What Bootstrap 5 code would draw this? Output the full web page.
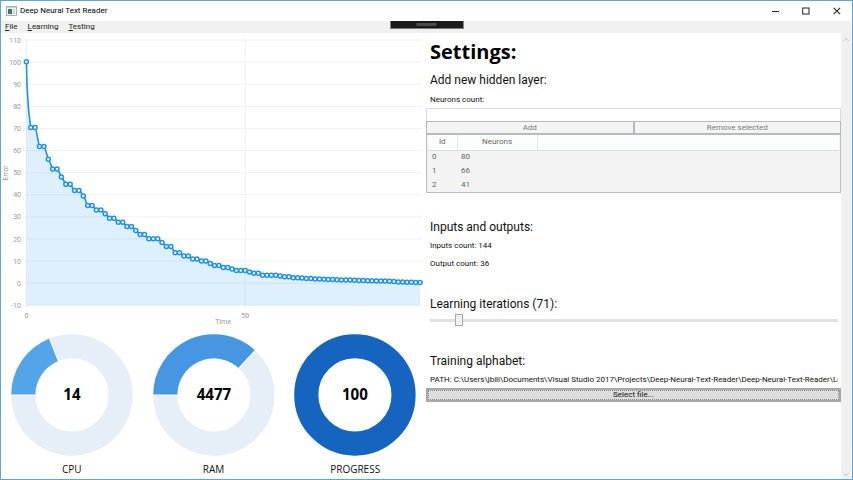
<!DOCTYPE html>
<html lang="en">
<head>
<meta charset="utf-8">
<meta name="viewport" content="width=device-width, initial-scale=1">
<title>Deep Neural Text Reader</title>
<link href="https://cdn.jsdelivr.net/npm/bootstrap@5.3.0/dist/css/bootstrap.min.css" rel="stylesheet">
<style>
body{font-family:Roboto,"Open Sans",sans-serif;font-size:8px;line-height:12px;color:#111;background:#fff}
.app-window{border:1px solid #5aa5e2;min-height:100vh}
.title-bar{height:20px;padding-left:5px}
.app-name{margin-left:3px}
.win-btn{width:31px;height:18px}
.menu-strip{background:#f0f0f0;height:12px;line-height:14px;padding-left:4px;gap:10px;margin-right:1px}
.menu-strip a{color:#222;text-decoration:none}
.dock-tab{top:20px;width:73px;height:8px;background:#1a1a1a;border-bottom:1px solid #777}
.dock-grip{width:20px;height:3px;background:#4d4d4d;margin-top:2px}
.pane-left{flex:425 1 0;min-width:0}
.pane-right{flex:415 1 0;min-width:0;padding-top:4px}
.scroll-rail{width:10px;background:#f0f0f0;margin-right:1px;padding:4px 0 2px}
.axis-text{font-size:7px;fill:#9a9a9a}
.gauge{width:86%}
.gauge-value{font-family:"Open Sans",sans-serif;font-size:15px;font-weight:700;fill:#000}
.gauge-name{font-family:"Open Sans",sans-serif;font-size:10px;line-height:14px;margin-top:6px}
.page-title{font-family:"Open Sans",sans-serif;font-size:20px;line-height:30px;font-weight:700;color:#000}
.section-title{font-size:12px;line-height:18px;font-weight:400;color:#111}
.gap-above{margin-top:25px}
.indent{padding-left:4px;padding-right:3px}
.neuron-label{margin:5px 0 2px}
.neuron-input{height:13px;border:1px solid #dcdcdc;border-bottom:0;outline:0;font-size:8px}
.flat-btn{height:13px;line-height:11px;font-size:8px;padding:0;border:1px solid #b4b8bb;border-radius:0;background:#f4f4f4;color:#7c7c7c}
.layer-list{border:1px solid #b9bdbf;background:#f3f3f3;padding:0 1px;color:#666}
.layer-list table{table-layout:fixed}
.layer-list th{height:15px;padding:0;font-weight:400;text-align:center;background:#fcfdfd;border-bottom:1px solid #ddd;border-right:1px solid #e2e4e5}
.layer-list th:last-child{border-right:0}
.layer-list td{height:14px;padding:0 0 0 4px}
.col-id{width:29px}.col-neurons{width:80px}
.stat-line{margin-bottom:6px}
.iter-slider{height:14px;appearance:none;background:transparent}
.iter-slider::-webkit-slider-runnable-track{height:3px;background:#e1e1e1}
.iter-slider::-webkit-slider-thumb{appearance:none;width:8px;height:12px;margin-top:-5px;background:#f0f0f0;border:1px solid #aaa;border-radius:0}
.path-line{margin-bottom:2px}
.file-btn{height:14px;line-height:10px;font-size:8px;padding:0;border:2px solid #a8a8a8;border-radius:0;background:#ddd;outline:1px dotted #888;outline-offset:-3px;color:#111}
</style>
<script src="https://cdn.jsdelivr.net/npm/bootstrap@5.3.0/dist/js/bootstrap.bundle.min.js"></script>
</head>
<body>
<div class="app-window position-relative d-flex flex-column">
  <header class="title-bar d-flex align-items-center">
    <svg width="11" height="10" viewBox="0 0 11 10" aria-hidden="true"><rect x=".5" y=".5" width="10" height="9" fill="#f3f3f3" stroke="#aab3b7"/><rect x="1" y="1" width="9" height="1" fill="#c8d0d4"/><rect x="2" y="3" width="4" height="5" fill="#397a72"/><rect x="7" y="3" width="2" height="5" fill="#d4d8da"/></svg>
    <span class="app-name flex-grow-1 text-black">Deep Neural Text Reader</span>
    <button class="win-btn btn p-0 border-0 d-flex align-items-center justify-content-center" aria-label="Minimize"><svg width="8" height="8"><path d="M1 4.500h7" stroke="#222"/></svg></button>
    <button class="win-btn btn p-0 border-0 d-flex align-items-center justify-content-center" aria-label="Maximize"><svg width="8" height="8"><rect x=".7" y="1" width="6.300" height="6" fill="none" stroke="#222"/></svg></button>
    <button class="win-btn btn p-0 border-0 d-flex align-items-center justify-content-center" aria-label="Close"><svg width="8" height="8"><path d="M.7 .8l6.400 6.400M7.100 .8L.7 7.200" stroke="#222" stroke-width="1.100"/></svg></button>
  </header>
  <nav class="menu-strip d-flex align-items-center" aria-label="Main menu">
    <a href="#"><u>F</u>ile</a><a href="#"><u>L</u>earning</a><a href="#"><u>T</u>esting</a>
  </nav>
  <div class="dock-tab position-absolute start-50 translate-middle-x d-flex justify-content-center"><div class="dock-grip"></div></div>

  <main class="d-flex flex-grow-1">
    <section class="pane-left" aria-label="Monitoring">
      <svg id="chart" class="d-block w-100" viewBox="1 33 425 301" role="img" aria-label="Error over time"></svg>
      <div class="row g-0 text-center" id="gauges"></div>
    </section>

    <section class="pane-right" aria-label="Settings">
      <h1 class="page-title indent m-0">Settings:</h1>
      <h2 class="section-title indent m-0 mt-1">Add new hidden layer:</h2>
      <label class="neuron-label indent d-block" for="neurons">Neurons count:</label>
      <input id="neurons" class="neuron-input d-block w-100 p-0" type="text">
      <div class="d-flex">
        <button class="flat-btn btn w-50">Add</button><button class="flat-btn btn w-50">Remove selected</button>
      </div>
      <div class="layer-list">
        <table class="w-100">
          <thead><tr><th class="col-id">Id</th><th class="col-neurons">Neurons</th><th></th></tr></thead>
          <tbody><tr><td>0</td><td>80</td><td></td></tr><tr><td>1</td><td>66</td><td></td></tr><tr><td>2</td><td>41</td><td></td></tr></tbody>
        </table>
      </div>
      <h2 class="section-title gap-above indent mb-1">Inputs and outputs:</h2>
      <p class="stat-line indent">Inputs count: 144</p>
      <p class="stat-line indent">Output count: 36</p>
      <h2 class="section-title gap-above indent mb-0"><label for="iterations">Learning iterations (71):</label></h2>
      <div class="indent d-flex"><input id="iterations" class="iter-slider w-100 m-0 p-0" type="range" min="10" max="1000" value="71"></div>
      <h2 class="section-title gap-above indent mb-1">Training alphabet:</h2>
      <div class="indent"><p class="path-line overflow-hidden text-nowrap">PATH: C:\Users\jbili\Documents\Visual Studio 2017\Projects\Deep-Neural-Text-Reader\Deep-Neural-Text-Reader\Le</p></div>
      <button class="file-btn btn d-block w-100">Select file...</button>
    </section>
    <div class="scroll-rail d-flex flex-column justify-content-between align-items-center" aria-hidden="true">
      <svg width="6" height="5"><path d="M.5 4L3 1.200L5.500 4" fill="none" stroke="#c4c4c4"/></svg>
      <svg width="6" height="5"><path d="M.5 1L3 3.800L5.500 1" fill="none" stroke="#c4c4c4"/></svg>
    </div>
  </main>
</div>
<script>
// Error value per training step
const errors=[100.2,70.4,70.4,61.8,61.8,56.1,51.7,51.7,48,44.8,44.8,41.9,41.9,39.5,35.1,35.1,33.1,33.1,31.4,29.4,29.4,27.6,27.6,25.7,25.7,23.8,22,22,20.1,20.1,20.1,18.4,16.6,16.6,13.8,13.8,12.3,12.3,11,11,10,10,8.9,8,8,7.1,7.1,6.4,5.7,5.7,5.7,5.1,4.5,4.5,3.6,3.6,3.6,3.6,3.2,2.9,2.9,2.5,2.5,2.3,2.1,2.1,1.9,1.9,1.8,1.7,1.7,1.6,1.5,1.5,1.4,1.3,1.2,1.2,1.1,1.1,1,1,1,.9,.8,.6,.5,.4,.4,.3,.3];
const px=i=>26.4+i*4.375, py=v=>283.2-v*2.21, n=v=>v.toFixed(1);
let out='';
for(let v=-10;v<=110;v+=10){
  out+=`<path d="M24 ${n(py(v))}H422" stroke="#f1f1f1"/><text class="axis-text" x="21" y="${n(py(v)+2.5)}" text-anchor="end">${v}</text>`;
}
for(const i of [0,50]) out+=`<path d="M${n(px(i))} 38V308" stroke="#f1f1f1"/><text class="axis-text" x="${n(px(i))}" y="318" text-anchor="middle">${i}</text>`;
out+='<text class="axis-text" x="223" y="324" text-anchor="middle">Time</text><text class="axis-text" transform="translate(8 173) rotate(-90)" text-anchor="middle">Error</text>';
const at=i=>{const k=Math.max(0,Math.min(errors.length-1,i));return [px(k),py(errors[k])]};
let line=`M${n(px(0))} ${n(py(errors[0]))}`;
for(let i=0;i<errors.length-1;i++){
  const [a,b,c,d]=[at(i-1),at(i),at(i+1),at(i+2)];
  line+=i?`C${n(b[0]+(c[0]-a[0])/8)} ${n(b[1])} ${n(c[0]-(d[0]-b[0])/8)} ${n(c[1]-(d[1]-b[1])/8)} ${n(c[0])} ${n(c[1])}`
         :`C${n(b[0]+.6)} ${n(b[1]+32)} ${n(c[0]-2)} ${n(c[1]-12)} ${n(c[0])} ${n(c[1])}`;
}
out+=`<path d="${line}V305.3H${n(px(0))}Z" fill="#2196f3" fill-opacity=".15"/><path d="${line}" fill="none" stroke="#1c90f0" stroke-width="1.6"/>`;
errors.forEach((v,i)=>out+=`<circle cx="${n(px(i))}" cy="${n(py(v))}" r="2" fill="#fff" stroke="#1c90f0" stroke-width="1.5"/>`);
document.getElementById('chart').innerHTML=out;

// Ring gauges; sweep is measured clockwise from the left edge
const gauges=[['CPU',14,68.3,'#54a4ea'],['RAM',4477,132.8,'#4796e1'],['PROGRESS',100,360,'#1565c0']];
document.getElementById('gauges').innerHTML=gauges.map(([name,value,deg,color])=>{
  const t=(180+deg)*Math.PI/180,c=60.5,ring='<circle cx="60.5" cy="60.5" r="48.3" fill="none" stroke-width="24"';
  const p=(r,a)=>`${n(c+r*Math.cos(a))} ${n(c+r*Math.sin(a))}`;
  const arc=deg<360?`${ring} stroke="#e6eef8"/><path d="M${p(60.3,Math.PI)}A60.300 60.300 0 0 1 ${p(60.3,t)}L${p(36.3,t)}A36.300 36.300 0 0 0 ${p(36.3,Math.PI)}Z" fill="${color}"/><path d="M${p(36,Math.PI)}L${p(61,Math.PI)}M${p(36,t)}L${p(61,t)}" stroke="#fff"/>`:`${ring} stroke="${color}"/>`;
  return `<div class="col"><svg class="gauge" viewBox="0 0 121 121" role="img" aria-label="${name}">${arc}<text class="gauge-value" x="60.5" y="66" text-anchor="middle">${value}</text></svg><div class="gauge-name">${name}</div></div>`;
}).join('');
</script>
</body>
</html>
